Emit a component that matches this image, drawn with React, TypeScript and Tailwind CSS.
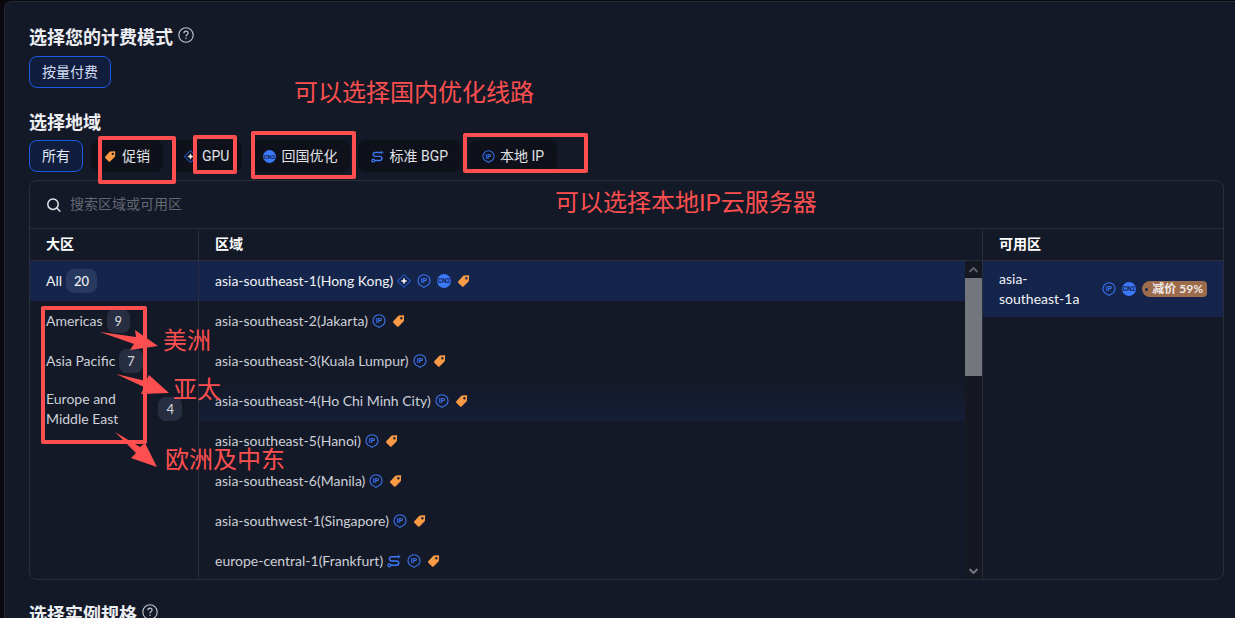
import type { ReactNode } from "react";

// Types
type IconName = "gpu" | "ip" | "cn2" | "bgp" | "tag";

type Region = {
  name: string;
  icons: IconName[];
  state?: "selected" | "hover";
};

// Data
const filters: { label: string; icon?: IconName }[] = [
  { label: "所有" },
  { label: "促销", icon: "tag" },
  { label: "GPU", icon: "gpu" },
  { label: "回国优化", icon: "cn2" },
  { label: "标准 BGP", icon: "bgp" },
  { label: "本地 IP", icon: "ip" },
];

const areas = [
  { name: "All", count: 20, selected: true },
  { name: "Americas", count: 9 },
  { name: "Asia Pacific", count: 7 },
  { name: "Europe and Middle East", count: 4 },
];

const regions: Region[] = [
  {
    name: "asia-southeast-1(Hong Kong)",
    icons: ["gpu", "ip", "cn2", "tag"],
    state: "selected",
  },
  { name: "asia-southeast-2(Jakarta)", icons: ["ip", "tag"] },
  { name: "asia-southeast-3(Kuala Lumpur)", icons: ["ip", "tag"] },
  {
    name: "asia-southeast-4(Ho Chi Minh City)",
    icons: ["ip", "tag"],
    state: "hover",
  },
  { name: "asia-southeast-5(Hanoi)", icons: ["ip", "tag"] },
  { name: "asia-southeast-6(Manila)", icons: ["ip", "tag"] },
  { name: "asia-southwest-1(Singapore)", icons: ["ip", "tag"] },
  { name: "europe-central-1(Frankfurt)", icons: ["bgp", "ip", "tag"] },
];

const rowStyles = {
  selected: "bg-[#14244b] text-[#f0f2f6]",
  hover: "bg-linear-to-b from-[#141927] to-[#141e38] text-[#cdd0d7]",
  normal: "text-[#cdd0d7]",
};

// Icons
const Icon = ({
  name,
  size = "size-3.5",
}: {
  name: IconName;
  size?: string;
}) => {
  const common = {
    viewBox: "0 0 14 14",
    className: `shrink-0 ${size}`,
    "aria-hidden": true,
  };

  if (name === "gpu") {
    return (
      <svg {...common} fill="none">
        <path
          d="M7 .6 13.400 7 7 13.400.6 7Z"
          stroke="#2450b8"
          strokeWidth="1.100"
        />
        <path
          d="M7 4.1 7.8 6.2 9.9 7 7.8 7.8 7 9.9 6.2 7.8 4.1 7 6.2 6.2Z"
          fill="#fff"
          stroke="#fff"
          strokeWidth=".5"
        />
      </svg>
    );
  }

  if (name === "ip") {
    return (
      <svg {...common} fill="none">
        <path
          d="M7 .7a6 6 0 0 1 6 6c0 2.500-1.400 4.300-3.700 5.200L7 13.400l-2.300-1.500C2.400 11 1 9.200 1 6.700a6 6 0 0 1 6-6Z"
          stroke="#3b74ee"
          strokeWidth="1.100"
        />
        <text
          x="7"
          y="9.200"
          textAnchor="middle"
          fontSize="7"
          fontWeight="700"
          fontFamily="Roboto, sans-serif"
          fill="#3b74ee"
        >
          IP
        </text>
      </svg>
    );
  }

  if (name === "cn2") {
    return (
      <svg {...common}>
        <circle cx="7" cy="7" r="6.900" fill="#3b78fa" />
        <text
          x="7"
          y="9.300"
          textAnchor="middle"
          fontSize="6.500"
          fontWeight="700"
          fontFamily="Roboto, sans-serif"
          fill="#142452"
        >
          CN2
        </text>
      </svg>
    );
  }

  if (name === "bgp") {
    return (
      <svg {...common} fill="none" stroke="#3b78fa">
        <path
          d="M12 2.700H4.500a2.100 2.100 0 0 0 0 4.200h5a2.200 2.200 0 0 1 0 4.400H3.800"
          strokeWidth="1.500"
        />
        <path d="m11.200 1 1.700 1.700-1.700 1.700" strokeWidth="1" />
        <circle cx="2.400" cy="11.300" r="1.500" strokeWidth="1.300" />
      </svg>
    );
  }

  return (
    <svg {...common}>
      <path
        fill="#fb9a45"
        fillRule="evenodd"
        d="M7 1.600 11.200 1.300c.6 0 1 .4.900 1L11.900 6.700c0 .3-.2.600-.4.800L6.500 12.400c-.4.400-1 .4-1.400 0L1.300 8.700c-.4-.4-.4-1 0-1.400L6.100 2c.2-.2.500-.4.900-.4ZM9.400 3a1.200 1.200 0 1 0 0 2.400A1.200 1.200 0 0 0 9.400 3Z"
      />
    </svg>
  );
};

const HelpIcon = () => (
  <svg
    viewBox="0 0 16 16"
    className="size-4"
    fill="none"
    stroke="#c3c6ce"
    aria-hidden
  >
    <circle cx="8" cy="8" r="7.200" strokeWidth="1.100" />
    <path
      d="M5.900 6.300C5.900 5 6.800 4.200 8 4.200s2.100.8 2.100 1.900C10.100 7.600 8 7.700 8 9.400"
      strokeWidth="1.200"
    />
    <path d="M8 10.700v1.300" strokeWidth="1.300" />
  </svg>
);

const Chevron = ({ down }: { down?: boolean }) => (
  <svg
    viewBox="0 0 9 6"
    className="w-[9px]"
    fill="none"
    stroke={down ? "#74767e" : "#5c5e67"}
    strokeWidth="2"
    aria-hidden
  >
    <path d={down ? "m.5 1 4 4 4-4" : "m.5 5 4-4 4 4"} />
  </svg>
);

// Components
const SectionTitle = ({
  children,
  help,
}: {
  children: ReactNode;
  help?: boolean;
}) => (
  <h2 className="flex items-center gap-[5px] text-lg leading-[30px] font-bold text-[#eceef3]">
    {children}
    {help && (
      <button type="button" aria-label="help" className="mb-1.5">
        <HelpIcon />
      </button>
    )}
  </h2>
);

const ColumnHeader = ({ children }: { children: ReactNode }) => (
  <h3 className="flex h-8 shrink-0 items-center border-b border-[#2a2e3b] px-4 pb-0.5 text-sm font-bold text-white">
    {children}
  </h3>
);

const Mark = ({ className }: { className: string }) => (
  <div
    className={`pointer-events-none absolute rounded-xs border-4 border-[#fd4f4f] ${className}`}
  />
);

const Note = ({
  className,
  children,
}: {
  className: string;
  children: ReactNode;
}) => (
  <p
    className={`pointer-events-none absolute text-2xl leading-8 whitespace-nowrap text-[#fd4f4f] ${className}`}
  >
    {children}
  </p>
);

const Annotations = () => (
  <>
    <Mark className="top-[136px] left-[98px] h-12 w-[78px]" />
    <Mark className="top-[135px] left-[193px] h-[39px] w-11" />
    <Mark className="top-[131px] left-[251px] h-12 w-[105px]" />
    <Mark className="top-[133px] left-[463px] h-10 w-[125px]" />
    <Mark className="top-[306px] left-[41px] h-[138px] w-[106px]" />
    <Note className="top-[77px] left-[294px]">可以选择国内优化线路</Note>
    <Note className="top-[187px] left-[555px]">可以选择本地IP云服务器</Note>
    <Note className="top-[325px] left-[163px]">美洲</Note>
    <Note className="top-[374px] left-[173px]">亚太</Note>
    <Note className="top-[444px] left-[165px]">欧洲及中东</Note>
    <svg
      viewBox="0 0 80 150"
      className="pointer-events-none absolute top-[325px] left-[95px] h-[150px] w-20"
      fill="#fd4f4f"
      aria-hidden
    >
      <path d="M5 7 41 12 40 5 63 21 35 25 39 19Z" />
      <path d="M21 49 51 56 54 50 74 68 46 69 49 62Z" />
      <path d="M20 107 45 122 50 118 62 142 36 133 41 128Z" />
    </svg>
  </>
);

const App = () => {
  // JSX
  return (
    <div className="relative h-screen overflow-hidden bg-[#08080d] pt-px pl-1 font-[Roboto,'Noto_Sans_CJK_SC',sans-serif] text-sm">
      <main className="min-h-full rounded-tl-lg border-t border-l border-[#262a36] bg-[#141927] pt-[21px] pr-[11px] pl-6">
        <SectionTitle help>选择您的计费模式</SectionTitle>
        <button
          type="button"
          className="mt-[3px] h-8 rounded-lg border border-[#1d5be0] bg-[#101d3d] px-3 text-[#d3def5]"
        >
          按量付费
        </button>

        <div className="mt-5">
          <SectionTitle>选择地域</SectionTitle>
        </div>
        <div className="mt-0.5 flex flex-wrap gap-2">
          {filters.map(({ label, icon }) => (
            <button
              key={label}
              type="button"
              className={`flex h-8 items-center gap-[5px] rounded-lg border px-3 ${
                icon
                  ? "border-[#0e1119] bg-[#0e1119] text-[#e0e2e8]"
                  : "border-[#1d5be0] bg-[#101d3d] text-[#e4ebfa]"
              }`}
            >
              {icon && <Icon name={icon} size="size-[13px]" />}
              {label}
            </button>
          ))}
        </div>

        <section className="mt-2 overflow-hidden rounded-lg border border-[#2a2e3b]">
          <label className="flex h-12 items-center gap-2 border-b border-[#2a2e3b] px-4">
            <svg
              viewBox="0 0 16 16"
              className="size-4"
              fill="none"
              stroke="#e2e4ea"
              strokeWidth="1.500"
              aria-hidden
            >
              <circle cx="7" cy="7.200" r="5.200" />
              <path d="m10.800 11 3.500 3.500" />
            </svg>
            <input
              type="text"
              aria-label="搜索区域或可用区"
              placeholder="搜索区域或可用区"
              className="flex-1 bg-transparent pb-0.5 text-white outline-none placeholder:text-[#636772]"
            />
          </label>

          <div className="flex font-[Lato,'Noto_Sans_CJK_SC',sans-serif]">
            <div className="w-[169px] shrink-0 border-r border-[#2a2e3b]">
              <ColumnHeader>大区</ColumnHeader>
              {areas.map(({ name, count, selected }) => (
                <button
                  key={name}
                  type="button"
                  className={`flex min-h-10 w-full items-center gap-1 px-4 py-2 text-left leading-5 ${
                    selected ? rowStyles.selected : rowStyles.normal
                  }`}
                >
                  <span>{name}</span>
                  <span
                    className={`-my-1 rounded-lg px-2 text-[13px] leading-6 font-medium ${
                      selected ? "bg-[#283960]" : "bg-[#272e41]"
                    }`}
                  >
                    {count}
                  </span>
                </button>
              ))}
            </div>

            <div className="min-w-0 flex-1">
              <ColumnHeader>区域</ColumnHeader>
              <div className="flex h-[318px] overflow-hidden">
                <div className="flex-1">
                  {regions.map(({ name, icons, state }) => (
                    <button
                      key={name}
                      type="button"
                      className={`flex h-10 w-full items-center gap-1 px-4 ${
                        rowStyles[state ?? "normal"]
                      }`}
                    >
                      {name}
                      <span className="flex gap-1.5">
                        {icons.map((icon) => (
                          <Icon key={icon} name={icon} />
                        ))}
                      </span>
                    </button>
                  ))}
                </div>
                <div className="flex w-[17px] flex-col items-center bg-[#151721]">
                  <span className="flex h-[17px] items-center">
                    <Chevron />
                  </span>
                  <span className="h-[98px] w-full bg-[#74767e]" />
                  <span className="mt-auto flex h-[17px] items-center">
                    <Chevron down />
                  </span>
                </div>
              </div>
            </div>

            <div className="w-[241px] shrink-0 border-l border-[#2a2e3b]">
              <ColumnHeader>可用区</ColumnHeader>
              <button
                type="button"
                className={`flex w-full items-center gap-1.5 px-4 py-2 text-left leading-5 ${rowStyles.selected}`}
              >
                <span className="mr-auto w-[84px]">asia-southeast-1a</span>
                <Icon name="ip" />
                <Icon name="cn2" />
                <span className="relative flex h-4 items-center rounded-r-sm rounded-l-lg bg-[#9d6c4d] pr-1 pl-2.5 text-xs font-bold text-[#eeeae8]">
                  <span className="absolute left-[3px] size-[3px] rounded-full bg-[#14244b]" />
                  减价 59%
                </span>
              </button>
            </div>
          </div>
        </section>

        <div className="mt-5">
          <SectionTitle help>选择实例规格</SectionTitle>
        </div>
      </main>
      <Annotations />
    </div>
  );
};

export default App;
